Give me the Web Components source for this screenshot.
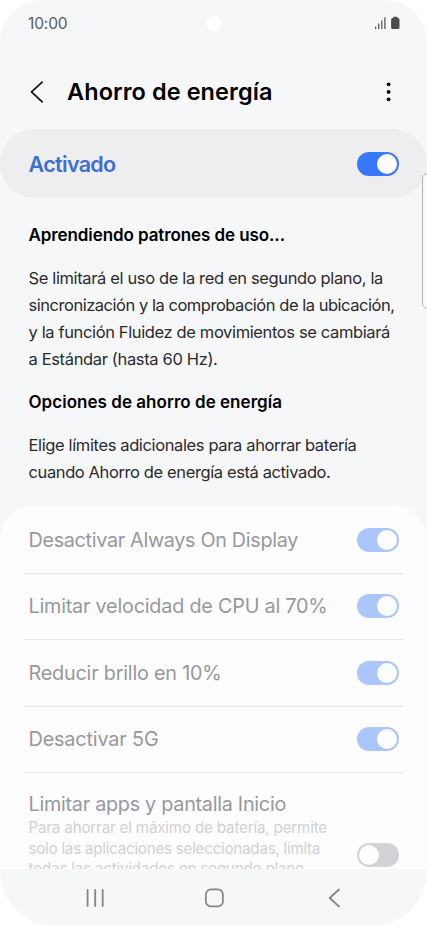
<!DOCTYPE html>
<html lang="es">
<head>
<meta charset="utf-8">
<title>Ahorro de energía</title>
<style>
html, body { margin: 0; background: #fff; }
body { font-family: Inter, "Noto Sans", sans-serif; }
</style>
</head>
<body>
<phone-screen>
  <status-bar></status-bar>
  <app-header></app-header>
  <main-switch></main-switch>
  <info-section first>
    <fit-text slot="title" w="256.5">Aprendiendo patrones de uso...</fit-text>
    <fit-text w="354.5">Se limitará el uso de la red en segundo plano, la</fit-text>
    <fit-text w="366">sincronización y la comprobación de la ubicación,</fit-text>
    <fit-text w="361.5">y la función Fluidez de movimientos se cambiará</fit-text>
    <fit-text w="189">a Estándar (hasta 60 Hz).</fit-text>
  </info-section>
  <info-section>
    <fit-text slot="title" w="253.5">Opciones de ahorro de energía</fit-text>
    <fit-text w="328">Elige límites adicionales para ahorrar batería</fit-text>
    <fit-text w="302">cuando Ahorro de energía está activado.</fit-text>
  </info-section>
  <option-list>
    <option-row on><fit-text w="269.5">Desactivar Always On Display</fit-text></option-row>
    <option-row on><fit-text w="299">Limitar velocidad de CPU al 70%</fit-text></option-row>
    <option-row on><fit-text w="193">Reducir brillo en 10%</fit-text></option-row>
    <option-row on><fit-text w="130">Desactivar 5G</fit-text></option-row>
    <option-row tall><fit-text w="257.5">Limitar apps y pantalla Inicio</fit-text>
      <fit-text slot="detail" w="298.5">Para ahorrar el máximo de batería, permite</fit-text>
      <fit-text slot="detail" w="291.5">solo las aplicaciones seleccionadas, limita</fit-text>
      <fit-text slot="detail" w="275.5">todas las actividades en segundo plano</fit-text>
    </option-row>
  </option-list>
  <nav-bar slot="nav"></nav-bar>
  <edge-handle slot="edge"></edge-handle>
</phone-screen>
<script>
function define(name, markup, connected) {
  customElements.define(name, class extends HTMLElement {
    constructor() {
      super();
      this.attachShadow({ mode: 'open' }).innerHTML = markup;
    }
    connectedCallback() { if (connected) connected.call(this); }
  });
}

define('phone-screen', `<style>
:host { display: flex; flex-direction: column; position: relative; width: 427px; height: 926px; overflow: hidden; background: #f6f7f9; border-radius: 42px 42px 56px 56px; }
.body { flex: 1; min-height: 0; overflow: hidden; display: flex; flex-direction: column; }
</style><div class="body"><slot></slot></div><slot name="nav"></slot><slot name="edge"></slot>`);

define('status-bar', `<style>
:host { display: grid; grid-template-columns: 1fr auto 1fr; align-items: center; height: 46px; flex: none; padding: 0 27px 0 28px; box-sizing: border-box; color: #5a5a5c; font-size: 15.5px; }
.cam { width: 15px; height: 15px; border-radius: 50%; background: #fff; margin-right: 1px; }
svg { justify-self: end; display: block; }
</style><fit-text w="39.5">10:00</fit-text><span class="cam"></span>
<svg width="26" height="14" viewBox="0 0 26 14"><g stroke="#5b5b5b" stroke-width="1.3"><path d="M1.6 10.5v2.4M4.7 7.6v5.3M7.8 4.6v8.3"/><path d="M10.9 1.2v11.7"/></g><path fill="#4b4b4b" d="M19.3 .7h4v1.2h.7q1.5 0 1.5 1.5v8q0 1.6-1.6 1.6h-5.2q-1.6 0-1.6-1.6v-8q0-1.5 1.5-1.5h.7z"/></svg>`);

define('app-header', `<style>
:host { display: flex; align-items: center; height: 83px; flex: none; box-sizing: border-box; padding: 8px 31px 0 29px; color: #000; font-size: 23.5px; font-weight: 600; }
.t { flex: 1; margin-left: 22px; }
svg { display: block; }
</style><svg width="16" height="24" viewBox="0 0 16 24" fill="none" stroke="#111" stroke-width="1.7" stroke-linecap="round" stroke-linejoin="round"><path d="M13.2 2.2 2.5 11.9l10.7 9.9"/></svg>
<div class="t"><fit-text w="205.5">Ahorro de energía</fit-text></div>
<svg width="14" height="24" viewBox="0 0 14 24"><circle cx="6.6" cy="4.3" r="1.9"/><circle cx="6.6" cy="11.9" r="1.9"/><circle cx="6.6" cy="19.3" r="1.9"/></svg>`);

define('main-switch', `<style>
:host { display: flex; align-items: center; justify-content: space-between; height: 69px; flex: none; box-sizing: border-box; padding: 0 28px 0 28.5px; background: #eeeef0; border-radius: 34.5px; color: #3c6fd2; font-size: 21.5px; font-weight: 600; }
</style><fit-text w="87">Activado</fit-text><toggle-switch on></toggle-switch>`);

define('toggle-switch', `<style>
:host { display: flex; flex: none; box-sizing: border-box; width: 42px; height: 24px; padding: 2px; border-radius: 12px; background: #d3d3d7; }
:host([on]) { background: #3878fa; justify-content: flex-end; }
:host([on][dim]) { background: #abc6fd; }
i { width: 20px; height: 20px; border-radius: 50%; background: #fdfdff; }
</style><i></i>`);

define('info-section', `<style>
:host { display: block; flex: none; padding: 16px 28.5px 0; line-height: 27px; font-size: 16.5px; color: #2b2b2d; }
:host([first]) { padding-top: 23.5px; }
.h { color: #000; font-weight: 600; font-size: 17px; margin-bottom: 16px; }
</style><div class="h"><slot name="title"></slot></div><slot></slot>`);

define('option-list', `<style>
:host { display: block; flex: none; margin-top: 20.5px; background: #fdfdff; border-radius: 34px 34px 0 0; }
</style><slot></slot>`);

define('option-row', `<style>
:host { display: flex; align-items: center; justify-content: space-between; box-sizing: border-box; height: 66.6px; margin: 0 24px; padding: 0 4px 0 4.5px; border-bottom: 1.5px solid #e6e6e9; color: #97989b; font-size: 19.8px; line-height: 28px; }
:host(:first-child) { height: 67.5px; padding-top: 1px; }
:host([tall]) { height: 163px; border: 0; }
:host([tall]) .text { align-self: flex-start; padding-top: 16.4px; }
.detail { color: #d0d0d4; font-size: 15.2px; line-height: 20.6px; }
:host([tall]) .detail { padding-top: .6px; }
</style><div class="text"><slot></slot><div class="detail"><slot name="detail"></slot></div></div><toggle-switch dim></toggle-switch>`, function () {
  this.shadowRoot.querySelector('toggle-switch').toggleAttribute('on', this.hasAttribute('on'));
});

define('nav-bar', `<style>
:host { display: grid; grid-template-columns: repeat(3, 120px); justify-content: center; justify-items: center; align-items: center; height: 57px; flex: none; background: #f6f7f9; padding: 1px 0 0 2px; box-sizing: border-box; }
svg { display: block; }
</style>
<svg width="20" height="20" viewBox="0 0 20 20" stroke="#858588" stroke-width="1.8" stroke-linecap="round"><path d="M2.6 2v16M10.2 2v16M17.7 2v16"/></svg>
<svg width="20" height="20" viewBox="0 0 20 20" fill="none" stroke="#858588" stroke-width="1.7"><rect x=".9" y="1.4" width="17" height="17" rx="5"/></svg>
<svg width="20" height="20" viewBox="0 0 20 20" fill="none" stroke="#858588" stroke-width="1.7" stroke-linecap="round" stroke-linejoin="round"><path d="M14 1.5 4.7 10l9.3 8.5"/></svg>`);

define('edge-handle', `<style>
:host { position: absolute; left: 422px; top: 173px; width: 12px; height: 136px; box-sizing: border-box; border: 1.5px solid #b4b4b6; border-radius: 6px; background: #fafafb; }
</style>`);

// Single line of text whose letter spacing is tuned so that it spans the given width.
define('fit-text', `<style>
:host { display: block; white-space: nowrap; }
span { display: inline-block; }
</style><span><slot></slot></span>`, function () {
  const span = this.shadowRoot.querySelector('span');
  const n = this.textContent.trim().length;
  span.style.letterSpacing = (this.getAttribute('w') - span.getBoundingClientRect().width) / n + 'px';
});
</script>
</body>
</html>
